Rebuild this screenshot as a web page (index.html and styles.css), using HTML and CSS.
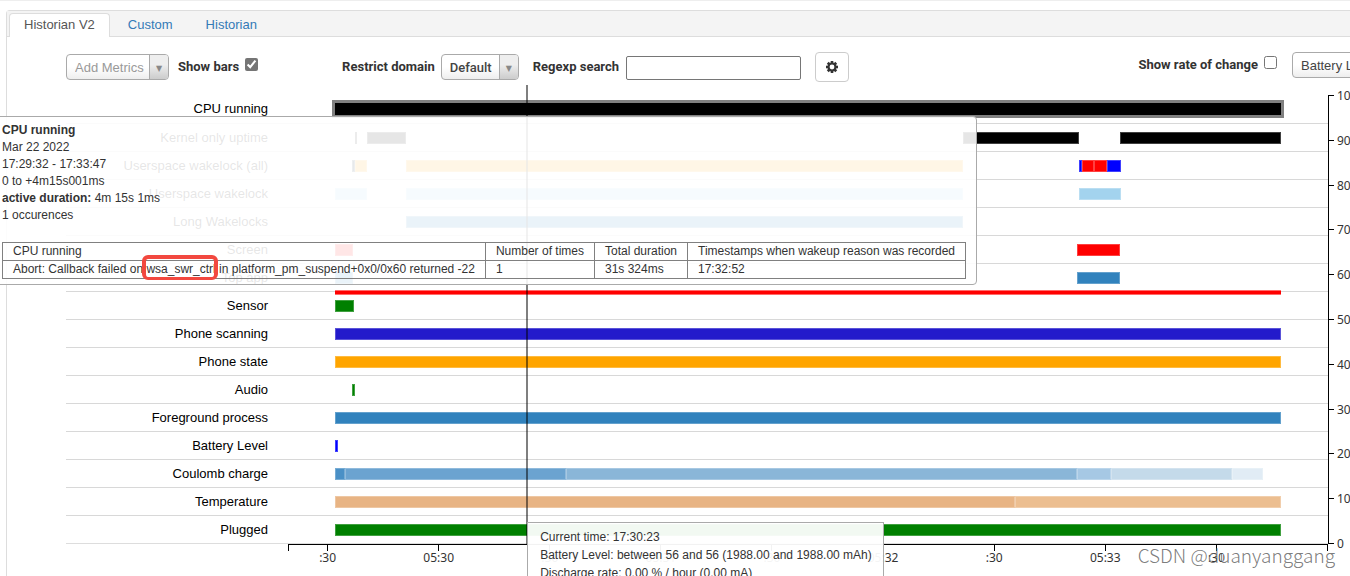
FILE: index.html
```html
<!DOCTYPE html>
<html lang="en">
<head>
<meta charset="utf-8">
<title>Historian V2</title>
<link rel="stylesheet" href="styles.css">
</head>
<body>
<main class="panel">
  <nav class="tabs">
    <a class="tab active" href="#v2">Historian V2</a>
    <a class="tab" href="#custom">Custom</a>
    <a class="tab" href="#historian">Historian</a>
  </nav>
  <form class="toolbar">
    <span class="picker picker-metrics"><select aria-label="Add Metrics"><option>Add Metrics</option></select></span>
    <label class="check check-bars">Show bars <input type="checkbox" checked></label>
    <label class="field field-domain" for="domain">Restrict domain</label>
    <span class="picker picker-domain"><select id="domain"><option>Default</option></select></span>
    <label class="field field-search" for="search">Regexp search</label>
    <input class="search" id="search" type="text">
    <button class="gear" type="button" aria-label="Settings">
      <svg viewBox="0 0 14 14" width="14" height="14"><g fill="#333"><rect x="5.7" y="1" width="2.6" height="12"/><rect x="5.7" y="1" width="2.6" height="12" transform="rotate(45 7 7)"/><rect x="5.7" y="1" width="2.6" height="12" transform="rotate(90 7 7)"/><rect x="5.7" y="1" width="2.6" height="12" transform="rotate(135 7 7)"/><circle cx="7" cy="7" r="4.5"/></g><circle cx="7" cy="7" r="2.4" fill="#fff"/></svg>
    </button>
    <span class="right-tools">
      <label class="check">Show rate of change <input type="checkbox"></label>
      <span class="picker picker-level"><select aria-label="Line metric"><option>Battery Level</option></select></span>
    </span>
  </form>
  <section class="chart">
    <div class="rows" id="rows"></div>
    <div class="y-axis" id="y-axis"></div>
    <div class="x-axis" id="x-axis"></div>
    <div class="overlay">
      <div class="level-line"></div>
      <div class="cursor"></div>
      <div class="tip tip-time">
        <div>Current time: 17:30:23</div>
        <div>Battery Level: between 56 and 56 (1988.00 and 1988.00 mAh)</div>
        <div>Discharge rate: 0.00 % / hour (0.00 mA)</div>
      </div>
    </div>
  </section>
  <aside class="tip tip-event">
    <div><b>CPU running</b></div>
    <div>Mar 22 2022</div>
    <div>17:29:32 - 17:33:47</div>
    <div>0 to +4m15s001ms</div>
    <div><b>active duration:</b> 4m 15s 1ms</div>
    <div>1 occurences</div>
    <table>
      <tr><td>CPU running</td><td>Number of times</td><td>Total duration</td><td>Timestamps when wakeup reason was recorded</td></tr>
      <tr><td>Abort: Callback failed on <span class="marked">wsa_swr_ctrl</span> in platform_pm_suspend+0x0/0x60 returned -22</td><td>1</td><td>31s 324ms</td><td>17:32:52</td></tr>
    </table>
  </aside>
  <div class="watermark">CSDN @duanyanggang</div>
</main>
<script src="chart.js"></script>
</body>
</html>
```
FILE: styles.css
```css
* { box-sizing: border-box; }
body {
  margin: 0;
  height: 100vh;
  overflow: hidden;
  border-top: 1px solid #eee;
  background: #fff;
  color: #333;
  font: 13px "Liberation Sans", Arial, sans-serif;
}
.panel {
  position: relative;
  margin: 9px 0 0 6px;
  min-height: 100vh;
  border: 1px solid #ddd;
  border-right: 0;
  border-top-left-radius: 4px;
}
.tabs {
  display: flex;
  height: 26px;
  padding: 2px 0 0 2px;
  background: #f4f4f4;
  border-bottom: 1px solid #ddd;
}
.tab {
  height: 24px;
  padding: 0 14px;
  line-height: 22px;
  border: 1px solid transparent;
  border-bottom: 0;
  border-radius: 4px 4px 0 0;
  color: #337ab7;
  text-decoration: none;
}
.tab + .tab { margin-left: 3px; }
.tab.active { color: #555; background: #fff; border-color: #ddd; }

.toolbar {
  display: flex;
  align-items: center;
  height: 58px;
  padding: 2px 0 0 59px;
}
.picker {
  position: relative;
  flex: none;
  height: 26px;
  border: 1px solid #aaa;
  border-radius: 4px;
  overflow: hidden;
  background: linear-gradient(#fff 50%, #eee);
}
.picker select {
  appearance: none;
  width: 100%;
  height: 24px;
  padding: 1px 8px 0;
  border: 0;
  background: none;
  font: inherit;
  line-height: 24px;
  color: #444;
}
.picker::after {
  content: "▼";
  position: absolute;
  top: 0;
  right: 0;
  width: 18px;
  height: 24px;
  border-left: 1px solid #aaa;
  background: linear-gradient(#eee 40%, #ccc);
  color: #888;
  font: 8px/27px "DejaVu Sans", sans-serif;
  text-align: center;
  pointer-events: none;
}
.picker-metrics { width: 103px; }
.picker-metrics select { color: #999; }
.picker-domain { width: 78px; margin-left: 6px; }
.picker-domain select { font-family: Roboto, sans-serif; font-weight: 500; }
.picker-level { width: 140px; }
.check, .field { font: bold 13px Roboto, sans-serif; white-space: nowrap; }
.check, .field { padding-bottom: 2px; }
.check { display: flex; align-items: center; gap: 6px; }
.check input { width: 13px; height: 13px; margin: 0 0 3px; accent-color: #757575; }
.check-bars { margin-left: 9px; }
.field-domain { margin-left: 84px; }
.field-search { margin-left: 14px; }
.search {
  width: 175px;
  height: 24px;
  margin: 2px 0 0 7px;
  border: 1px solid #767676;
  border-radius: 2px;
}
.gear {
  display: grid;
  place-items: center;
  width: 34px;
  height: 30px;
  margin-left: 14px;
  padding: 0;
  border: 1px solid #ccc;
  border-radius: 4px;
  background: #fff;
}
.right-tools {
  display: flex;
  flex: none;
  align-items: center;
  gap: 15px;
  margin: 0 -82px 4px auto;
}

.chart {
  position: relative;
  display: grid;
  grid-template-columns: 1fr 22px;
  grid-template-rows: 449px auto;
  margin-left: 59px;
}
.rows { display: grid; grid-auto-rows: minmax(0, 1fr); border-bottom: 1px solid #ddd; }
.row { display: grid; grid-template-columns: 202px 1fr; gap: 20px; }
.row + .row { border-top: 1px solid #d8d8d8; }
.name { color: #000; text-align: right; line-height: 28px; }
.track { display: flex; padding-top: 8px; }
.bar {
  flex: none;
  height: 12px;
  background: var(--c);
  box-shadow: inset 0 0 0 1px rgba(255, 255, 255, .25);
}
.bar.selected { box-shadow: 0 0 0 3px #808080; }

.y-axis {
  display: flex;
  flex-direction: column;
  justify-content: space-between;
  border-left: 1px solid #000;
}
.y-tick {
  display: flex;
  align-items: center;
  gap: 3px;
  height: 1px;
  font: 12px "Noto Sans", sans-serif;
}
.y-tick::before { content: ""; flex: none; width: 5px; height: 1px; background: #000; }
.x-axis {
  display: flex;
  justify-content: space-between;
  margin-left: 222px;
  border-top: 1px solid #000;
}
.x-tick { width: 1px; font: 12px/14px "Noto Sans", sans-serif; }
.x-tick::before { content: ""; display: block; width: 1px; height: 6px; background: #000; }
.x-tick span { display: flex; justify-content: center; width: 1px; white-space: nowrap; }
.x-tick.first { margin-right: -72px; }

.overlay { position: absolute; inset: 0 22px 0 222px; pointer-events: none; }
.level-line {
  position: absolute;
  left: 4.52%;
  width: 90.96%;
  top: 195px;
  height: 5px;
  background: #f00;
  border: 1px solid #ff6a6a;
  border-width: 1px 0;
}
.cursor {
  position: absolute;
  left: 22.9%;
  top: -10px;
  width: 2px;
  height: 460px;
  background: rgba(0, 0, 0, .5);
}
.tip {
  position: absolute;
  border: 1px solid #aaa;
  font-size: 12px;
  line-height: 17px;
  white-space: nowrap;
}
.tip-time {
  left: 23%;
  top: 427px;
  width: 357px;
  padding: 5px 12px;
  line-height: 18px;
  background: rgba(255, 255, 255, .95);
}
.tip-event {
  left: -16px;
  top: 105px;
  padding: 5px 10px;
  border-radius: 4px;
  background: rgba(255, 255, 255, .9);
}
.tip-event table { margin-top: 18px; border-collapse: collapse; }
.tip-event td { height: 18px; padding: 0 10px; line-height: 17px; border: 1px solid #808080; }
.marked { position: relative; }
.marked::after {
  content: "";
  position: absolute;
  inset: -7px -2px -4px -4px;
  border: 4px solid #f2483f;
  border-bottom-width: 3px;
  border-radius: 6px;
}
.watermark {
  position: absolute;
  right: 15px;
  top: 530px;
  color: rgba(90, 90, 90, .8);
  font: 300 19px/28px "Noto Sans CJK SC", sans-serif;
  text-shadow: 1px 1px 0 #fff;
}
```
FILE: chart.js
```js
// Bars are [start, end, colour] on a time domain of 0..DOMAIN.
const DOMAIN = 1040;
const rows = [
  ["CPU running", [[47, 993, "#000"]]],
  ["Kernel only uptime", [[67, 69, "#000"], [79, 118, "#000"], [675, 791, "#000"], [832, 993, "#000"]]],
  ["Userspace wakelock (all)", [[64, 67, "#123"], [67, 79, "#ffa500"], [118, 675, "#ffa500"], [791, 794, "#00f"], [794, 806, "#f00"], [806, 819, "#f00"], [819, 833, "#00f"]]],
  ["Userspace wakelock", [[47, 79, "#a3d3ee"], [118, 675, "#a3d3ee"], [791, 833, "#a3d3ee"]]],
  ["Long Wakelocks", [[118, 675, "#3182bd"]]],
  ["Screen", [[47, 65, "#f00"], [789, 832, "#f00"]]],
  ["Top app", [[47, 65, "#3182bd"], [789, 832, "#3182bd"]]],
  ["Sensor", [[47, 66, "#008000"]]],
  ["Phone scanning", [[47, 993, "#231acb"]]],
  ["Phone state", [[47, 993, "#ffa500"]]],
  ["Audio", [[64, 67, "#008000"]]],
  ["Foreground process", [[47, 993, "#3182bd"]]],
  ["Battery Level", [[47, 50, "#00f"]]],
  ["Coulomb charge", [[47, 57, "#4a90c6"], [57, 278, "#6ba3d0"], [278, 789, "#8ab6d8"], [789, 823, "#a6c8e4"], [823, 944, "#c4daea"], [944, 975, "#e1ecf5"]]],
  ["Temperature", [[47, 727, "#e8b484"], [727, 993, "#ecbe90"]]],
  ["Plugged", [[47, 993, "#008000"]]]
];
const pct = v => (v / DOMAIN * 100).toFixed(3) + "%";
document.getElementById("rows").innerHTML = rows.map(([name, bars], i) => {
  let at = 0;
  const html = bars.map(([from, to, colour]) => {
    const bar = `<div class="bar${i ? "" : " selected"}" style="margin-left:${pct(from - at)};width:${pct(to - from)};--c:${colour}"></div>`;
    at = to;
    return bar;
  }).join("");
  return `<div class="row"><div class="name">${name}</div><div class="track">${html}</div></div>`;
}).join("");
document.getElementById("y-axis").innerHTML =
  [100, 90, 80, 70, 60, 50, 40, 30, 20, 10, 0].map(v => `<div class="y-tick">${v}</div>`).join("");
document.getElementById("x-axis").innerHTML =
  ["", ":30", "05:30", ":30", "05:31", ":30", "05:32", ":30", "05:33", ":30", ""]
    .map((v, i) => `<div class="x-tick${i ? "" : " first"}"><span>${v}</span></div>`).join("");
```
